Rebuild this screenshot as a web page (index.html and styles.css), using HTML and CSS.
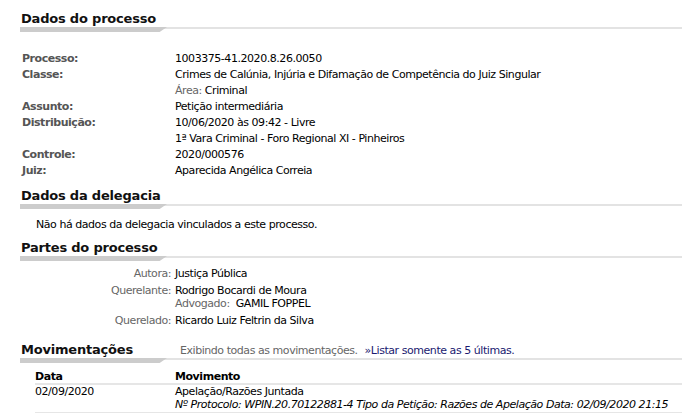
FILE: index.html
```html
<!DOCTYPE html>
<html lang="pt-BR">
<head>
<meta charset="utf-8">
<link rel="stylesheet" href="styles.css">
</head>
<body>
<div class="page">
  <div class="sec-head">
    <h2 class="sec-title">Dados do processo</h2>
    <div class="rule"><span class="rule-bar"></span></div>
  </div>
  <div class="dados">
    <div class="lbl">Processo:</div><div class="val">1003375-41.2020.8.26.0050</div>
    <div class="lbl">Classe:</div><div class="val">Crimes de Calúnia, Injúria e Difamação de Competência do Juiz Singular</div>
    <div class="lbl"></div><div class="val"><span class="muted">Área:</span> Criminal</div>
    <div class="lbl">Assunto:</div><div class="val">Petição intermediária</div>
    <div class="lbl">Distribuição:</div><div class="val">10/06/2020 às 09:42 - Livre</div>
    <div class="lbl"></div><div class="val">1ª Vara Criminal - Foro Regional XI - Pinheiros</div>
    <div class="lbl">Controle:</div><div class="val">2020/000576</div>
    <div class="lbl">Juiz:</div><div class="val">Aparecida Angélica Correia</div>
  </div>

  <div class="sec-head">
    <h2 class="sec-title">Dados da delegacia</h2>
    <div class="rule"><span class="rule-bar"></span></div>
  </div>
  <p class="nodata">Não há dados da delegacia vinculados a este processo.</p>

  <div class="sec-head">
    <h2 class="sec-title">Partes do processo</h2>
    <div class="rule"><span class="rule-bar"></span></div>
  </div>
  <div class="partes">
    <div class="p-lbl">Autora:</div><div class="p-val">Justiça Pública</div>
    <div class="p-lbl">Querelante:</div><div class="p-val">Rodrigo Bocardi de Moura<br><span class="muted">Advogado:</span>&nbsp; GAMIL FOPPEL</div>
    <div class="p-lbl">Querelado:</div><div class="p-val">Ricardo Luiz Feltrin da Silva</div>
  </div>

  <div class="sec-head">
    <div class="mov-line">
      <h2 class="sec-title mov-title">Movimentações</h2>
      <span class="exib">Exibindo todas as movimentações.</span>
      <a class="lnk" href="#">»Listar somente as 5 últimas.</a>
    </div>
    <div class="rule"><span class="rule-bar"></span></div>
  </div>
  <div class="mov">
    <div class="mov-row mov-hdr"><div class="c-data">Data</div><div class="c-mov">Movimento</div></div>
    <div class="mov-row mov-item"><div class="c-data">02/09/2020</div><div class="c-mov">Apelação/Razões Juntada<br><i>Nº Protocolo: WPIN.20.70122881-4 Tipo da Petição: Razões de Apelação Data: 02/09/2020 21:15</i></div></div>
  </div>
</div>
</body>
</html>
```

FILE: styles.css
```css
* { box-sizing: border-box; }
html, body { margin: 0; padding: 0; background: #fff; }
body {
  font-family: "DejaVu Sans", Verdana, sans-serif;
  font-size: 11px;
  letter-spacing: -0.45px;
  color: #000;
  overflow: hidden;
}
.page { padding: 11px 0 0 20px; }
.sec-title {
  margin: 0;
  font-size: 13px;
  font-weight: bold;
  line-height: 16px;
  letter-spacing: -0.2px;
  color: #111;
  padding-left: 1px;
}
.rule {
  height: 5px;
  border-top: 2px solid #e3e3e3;
  position: relative;
}
.rule-bar {
  position: absolute;
  left: 0;
  top: -2px;
  width: 147px;
  height: 5px;
  background: #cccccc;
  clip-path: polygon(0 0, 100% 0, 95% 100%, 0 100%);
}
.dados {
  display: grid;
  grid-template-columns: 155px 1fr;
  margin-top: 19px;
  margin-bottom: 9px;
  line-height: 16px;
}
.lbl { color: #555; font-weight: bold; padding-left: 2px; }
.val { color: #000; }
.muted { color: #666; }
.nodata { margin: 8px 0 7px 16px; line-height: 16px; }
.partes {
  display: grid;
  grid-template-columns: 151px 1fr;
  column-gap: 4px;
  row-gap: 4px;
  margin-top: 6px;
  margin-bottom: 15px;
  line-height: 13px;
}
.p-lbl { text-align: right; color: #666; }
.mov-line { display: flex; align-items: baseline; }
.mov-title { width: 160px; }
.exib { color: #666; }
.lnk { color: #1a1a70; text-decoration: none; margin-left: 7px; }
.mov { margin: 7px 0 0 15px; }
.mov-row {
  display: flex;
  line-height: 13px;
  border-bottom: 2px solid #e6e6e6;
}
.mov-hdr { font-weight: bold; }
.mov-item { padding-bottom: 1px; }
.c-data { width: 140px; }
.c-mov { flex: 1; }
```
